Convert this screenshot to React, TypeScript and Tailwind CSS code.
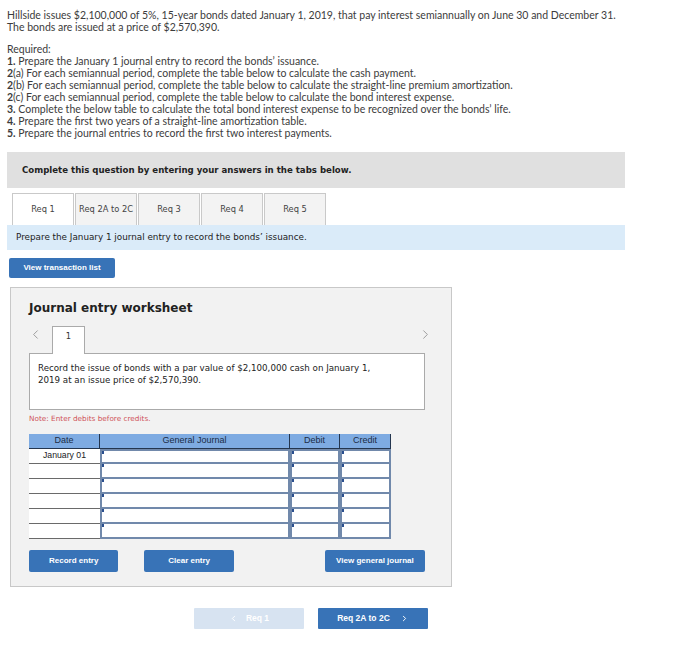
import { ChevronLeft, ChevronRight } from "lucide-react"

const tabs = ["Req 1", "Req 2A to 2C", "Req 3", "Req 4", "Req 5"]

const required = [
  ["1.", " Prepare the January 1 journal entry to record the bonds’ issuance."],
  ["2", "(a) For each semiannual period, complete the table below to calculate the cash payment."],
  ["2", "(b) For each semiannual period, complete the table below to calculate the straight-line premium amortization."],
  ["2", "(c) For each semiannual period, complete the table below to calculate the bond interest expense."],
  ["3.", " Complete the below table to calculate the total bond interest expense to be recognized over the bonds’ life."],
  ["4.", " Prepare the first two years of a straight-line amortization table."],
  ["5.", " Prepare the journal entries to record the first two interest payments."],
]

const rows = ["January 01", "", "", "", "", ""]

function InputCell({ first }: { first: boolean }) {
  return (
    <div
      className={`relative h-[15px] bg-white border-x-2 border-b-2 border-[#7189ab] ${first ? "border-t-2" : ""}`}
    >
      <span className="absolute left-0 top-0 w-[2px] h-[3px] bg-[#2b4f8e]" />
    </div>
  )
}

export default function App() {
  const blueBtn = "bg-[#3873b7] text-white font-bold text-[8px] rounded-[2px] flex items-center justify-center"
  const tahoma = "font-[DejaVu_Sans,sans-serif]"
  const arial = "font-[Liberation_Sans,Arial,sans-serif]"

  return (
    <div className="w-[688px] h-[658px] bg-white text-[#333]">
      {/* Question text */}
      <div className="px-[7px] pt-[9px] font-[Lato,sans-serif] text-[10.5px] leading-[12px] text-[#3c3c3c]">
        <p>Hillside issues $2,100,000 of 5%, 15-year bonds dated January 1, 2019, that pay interest semiannually on June 30 and December 31.</p>
        <p>The bonds are issued at a price of $2,570,390.</p>
        <p className="mt-[10px]">Required:</p>
        {required.map(([n, t], i) => (
          <p key={i}>
            <span className="font-bold">{n}</span>
            {t}
          </p>
        ))}
      </div>

      {/* Instructions */}
      <div className={`mx-[7px] mt-[13px] w-[618px] h-[36px] bg-[#e0e0e0] flex items-center pl-[15px] ${tahoma} text-[8.6px] font-bold text-[#222]`}>
        Complete this question by entering your answers in the tabs below.
      </div>

      {/* Tabs */}
      <div className={`flex gap-[1px] ml-[12px] mt-[5px] ${tahoma} text-[8.3px] text-[#444]`}>
        {tabs.map((t, i) => (
          <div
            key={t}
            className={`w-[62px] h-[32px] flex items-center justify-center border border-b-0 border-[#c9c9c9] ${i === 0 ? "bg-white" : "bg-[#f3f3f3]"}`}
          >
            {t}
          </div>
        ))}
      </div>
      <div className={`mx-[7px] w-[618px] h-[25px] bg-[#daebf9] flex items-center pl-[9px] ${tahoma} text-[8.8px] text-[#222]`}>
        Prepare the January 1 journal entry to record the bonds’ issuance.
      </div>

      <div className={`${blueBtn} ${arial} text-[8.3px] ml-[9px] mt-[8px] w-[106px] h-[20px]`}>
        View transaction list
      </div>

      {/* Worksheet */}
      <div className="ml-[10px] mt-[9px] w-[442px] h-[300px] bg-[#f2f2f2] border border-[#c8c8c8] pl-[18px] pr-[26px]">
        <h2 className={`mt-[13px] ${tahoma} font-bold text-[12px] text-[#222] leading-[14px]`}>
          Journal entry worksheet
        </h2>

        <div className="mt-[10px] flex items-end">
          <ChevronLeft className="w-[15px] h-[15px] text-[#8a8a8a] mb-[11px] ml-[-1px]" strokeWidth={1.3} />
          <div className={`ml-[9px] w-[33px] h-[28px] bg-white border border-b-0 border-[#aaa] flex justify-center pt-[3px] ${tahoma} text-[8.3px] text-[#333] relative top-[1px]`}>
            1
          </div>
          <div className="flex-1" />
          <ChevronRight className="w-[15px] h-[15px] text-[#8a8a8a] mb-[11px] mr-[-8px]" strokeWidth={1.3} />
        </div>
        <div className={`w-[396px] h-[57px] bg-white border border-[#aaa] px-[8px] pt-[8px] ${tahoma} text-[8.7px] leading-[12px] text-[#222]`}>
          Record the issue of bonds with a par value of $2,100,000 cash on January 1,
          <br />
          2019 at an issue price of $2,570,390.
        </div>

        <p className={`mt-[4px] ${tahoma} text-[7.3px] leading-[10px] text-[#d0545a]`}>
          Note: Enter debits before credits.
        </p>

        {/* Table */}
        <div className={`mt-[10px] w-[362px] ${arial} text-[9px]`}>
          <div className="grid grid-cols-[71px_190px_50px_51px] h-[15px] bg-[#7eabe2] text-[#1c2b45] border-b border-[#24364f]">
            <div className="flex items-center justify-center border-r border-[#24364f]">Date</div>
            <div className="flex items-center justify-center border-r border-[#24364f]">General Journal</div>
            <div className="flex items-center justify-center border-r border-[#24364f]">Debit</div>
            <div className="flex items-center justify-center border-r border-[#24364f]">Credit</div>
          </div>
          {rows.map((d, i) => (
            <div key={i} className="grid grid-cols-[71px_190px_50px_51px]">
              <div className="h-[15px] bg-white border-b border-[#6a6a6a] flex items-center justify-center text-[8.7px] text-[#222]">
                {d}
              </div>
              <InputCell first={i === 0} />
              <InputCell first={i === 0} />
              <InputCell first={i === 0} />
            </div>
          ))}
        </div>

        {/* Actions */}
        <div className={`mt-[11px] flex ${arial}`}>
          <div className={`${blueBtn} w-[92px] h-[22px]`}>Record entry</div>
          <div className={`${blueBtn} w-[92px] h-[22px] ml-[26px]`}>Clear entry</div>
          <div className={`${blueBtn} w-[103px] h-[22px] ml-[91px]`}>View general journal</div>
        </div>
      </div>

      {/* Bottom navigation */}
      <div className={`mt-[21px] ml-[194px] flex gap-[14px] ${arial}`}>
        <div className="w-[110px] h-[21px] bg-[#d7e3f1] text-white font-bold text-[8.5px] rounded-[1px] flex items-center justify-center gap-[8px]">
          <ChevronLeft className="w-[9px] h-[9px]" strokeWidth={2.5} />
          Req 1
        </div>
        <div className="w-[110px] h-[21px] bg-[#3873b7] text-white font-bold text-[8.5px] rounded-[1px] flex items-center justify-center gap-[10px]">
          Req 2A to 2C
          <ChevronRight className="w-[9px] h-[9px]" strokeWidth={2.5} />
        </div>
      </div>
    </div>
  )
}
